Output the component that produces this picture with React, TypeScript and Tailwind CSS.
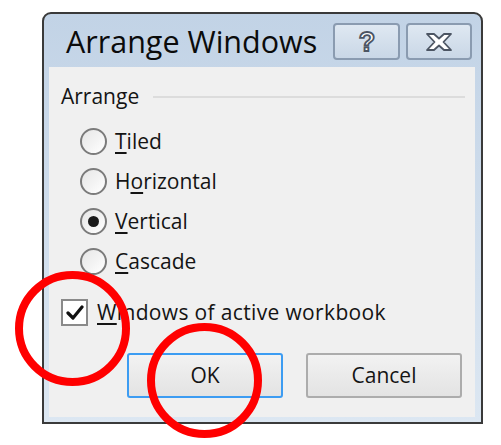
import React from "react";

const font = { fontFamily: '"Open Sans", "Noto Sans", Arial, sans-serif' };

function Radio({ label, access, rest, checked }: { label?: string; access: string; rest: string; checked?: boolean }) {
  return (
    <div className="flex items-center h-[40px]">
      <div className="w-[27px] h-[27px] rounded-full border-2 border-[#7b7b7b] bg-gradient-to-br from-[#e6e6e6] to-white flex items-center justify-center">
        {checked && <div className="w-[11px] h-[11px] rounded-full bg-[#1a1a1a]" />}
      </div>
      <span className="ml-[8px] text-[21px] text-[#141414] leading-none">
        {label}
        <u className="underline-offset-[3px]">{access}</u>
        {rest}
      </span>
    </div>
  );
}

export default function App() {
  return (
    <div className="relative w-[501px] h-[445px] bg-white overflow-hidden" style={font}>
      <div className="ml-[42px] mt-[12px] w-[441px] h-[412px] border-2 border-[#3a3a3a] rounded-t-[9px] bg-gradient-to-b from-[#c2d3e6] to-[#dce7f2] flex flex-col pl-[5px] pr-[6px] pb-[5px]">
        {/* Title bar */}
        <div className="h-[53px] flex items-start">
          <div className="pl-[17px] pt-[12px] text-[30.5px] leading-none text-[#0b0b0b]">
            Arrange Windows
          </div>
          <div className="ml-auto mt-[9px] flex gap-[6px] mr-[3px]">
            <div className="w-[67px] h-[37px] rounded-[4px] border-2 border-[#8a9bb0] bg-gradient-to-b from-[#dfe8f2] to-[#c9d7e6] flex items-center justify-center">
              <svg width="24" height="32" viewBox="0 0 24 32" className="overflow-visible">
                <text x="12" y="25" textAnchor="middle" fontSize="27" fontWeight="bold" fill="white" stroke="#4c5563" strokeWidth="1.8" fontFamily="Arial, sans-serif">?</text>
              </svg>
            </div>
            <div className="w-[66px] h-[37px] rounded-[4px] border-2 border-[#8a9bb0] bg-gradient-to-b from-[#dfe8f2] to-[#c9d7e6] flex items-center justify-center">
              <svg width="30" height="22" viewBox="0 0 30 22">
                <path d="M3 3 L10 3 L15 7.5 L20 3 L27 3 L19.5 11 L27 19 L20 19 L15 14.5 L10 19 L3 19 L10.5 11 Z" fill="white" stroke="#4c5563" strokeWidth="1.8" strokeLinejoin="round" />
              </svg>
            </div>
          </div>
        </div>

        {/* Body */}
        <div className="flex-1 bg-[#f0f0f0] flex flex-col pl-[12px] pr-[10px]">
          <div className="mt-[19px] flex items-center">
            <span className="text-[21px] leading-none text-[#141414]">Arrange</span>
            <div className="ml-[14px] flex-1 h-[2px] bg-[#dcdcdc]" />
          </div>
          <div className="mt-[14px] pl-[19px] flex flex-col">
            <Radio access="T" rest="iled" />
            <Radio label="H" access="o" rest="rizontal" />
            <Radio access="V" rest="ertical" checked />
            <Radio access="C" rest="ascade" />
          </div>
          <div className="mt-[18px] flex items-center">
            <div className="w-[27px] h-[27px] border-2 border-[#8a8a8a] bg-white flex items-center justify-center">
              <svg width="18" height="16" viewBox="0 0 18 16">
                <path d="M2 8 L7 13 L16 2" fill="none" stroke="#111" strokeWidth="3.2" strokeLinecap="round" strokeLinejoin="round" />
              </svg>
            </div>
            <span className="ml-[9px] text-[21px] leading-none text-[#141414] tracking-[0.35px]">
              <u className="underline-offset-[3px]">W</u>indows of active workbook
            </span>
          </div>
          <div className="mt-[27px] flex gap-[23px] pl-[66px]">
            <button className="w-[156px] h-[45px] rounded-[3px] border-2 border-[#3c9cf2] bg-gradient-to-b from-[#f2f2f2] to-[#e3e3e3] text-[21px] text-[#141414]">
              OK
            </button>
            <button className="w-[156px] h-[45px] rounded-[3px] border-2 border-[#acacac] bg-gradient-to-b from-[#f2f2f2] to-[#e3e3e3] text-[21px] text-[#141414]">
              Cancel
            </button>
          </div>
        </div>
      </div>

      {/* Red annotation circles */}
      <div className="absolute left-[15px] top-[271px] w-[115px] h-[115px] rounded-full border-[8px] border-[#ff0000]" />
      <div className="absolute left-[147px] top-[323px] w-[115px] h-[115px] rounded-full border-[8px] border-[#ff0000]" />
    </div>
  );
}
